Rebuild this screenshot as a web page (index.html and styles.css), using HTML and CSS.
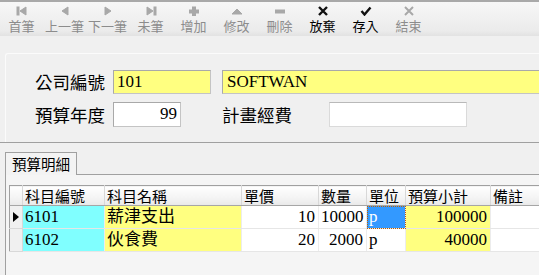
FILE: index.html
```html
<!DOCTYPE html>
<html lang="zh-Hant">
<head>
    <meta charset="UTF-8">
    <title>預算資料維護</title>
    <link rel="stylesheet" href="styles.css">
</head>
<body>

<div class="toolbar">
    <div class="tool off">
        <svg class="ico" width="12" height="10" viewBox="0 0 12 10"><rect x="1" y="1" width="2" height="8"/><polygon points="10,1 10,9 4,5"/></svg>
        <span>首筆</span>
    </div>
    <div class="tool off">
        <svg class="ico" width="12" height="10" viewBox="0 0 12 10"><polygon points="9,1 9,9 3,5"/></svg>
        <span>上一筆</span>
    </div>
    <div class="tool off">
        <svg class="ico" width="12" height="10" viewBox="0 0 12 10"><polygon points="3,1 3,9 9,5"/></svg>
        <span>下一筆</span>
    </div>
    <div class="tool off">
        <svg class="ico" width="12" height="10" viewBox="0 0 12 10"><polygon points="2,1 2,9 8,5"/><rect x="9" y="1" width="2" height="8"/></svg>
        <span>未筆</span>
    </div>
    <div class="tool off">
        <svg class="ico" width="12" height="10" viewBox="0 0 12 10"><rect x="4.5" y="1" width="3" height="9"/><rect x="1.5" y="4" width="9" height="3"/></svg>
        <span>增加</span>
    </div>
    <div class="tool off">
        <svg class="ico" width="12" height="10" viewBox="0 0 12 10"><polygon points="1,8 11,8 6,3"/></svg>
        <span>修改</span>
    </div>
    <div class="tool off">
        <svg class="ico" width="12" height="10" viewBox="0 0 12 10"><rect x="1.5" y="4" width="9" height="3"/></svg>
        <span>刪除</span>
    </div>
    <div class="tool">
        <svg class="ico" width="12" height="10" viewBox="0 0 12 10"><path d="M2 1 L10 9 M10 1 L2 9" stroke-width="2.4" fill="none"/></svg>
        <span>放棄</span>
    </div>
    <div class="tool">
        <svg class="ico" width="12" height="10" viewBox="0 0 12 10"><path d="M1.5 5 L4.5 8.5 L10.5 1.5" stroke-width="2.4" fill="none"/></svg>
        <span>存入</span>
    </div>
    <div class="tool off">
        <svg class="ico" width="12" height="10" viewBox="0 0 12 10"><path d="M2 1 L10 9 M10 1 L2 9" stroke-width="2" fill="none"/></svg>
        <span>結束</span>
    </div>
</div>

<div class="head-panel">
    <div class="field-row">
        <label class="lbl">公司編號</label>
        <div class="box yellow w-code">101</div>
        <div class="box yellow w-name">SOFTWAN</div>
    </div>
    <div class="field-row">
        <label class="lbl">預算年度</label>
        <div class="box num w-year">99</div>
        <label class="lbl lbl-wide">計畫經費</label>
        <div class="box w-plan"></div>
    </div>
</div>
<div class="divider"></div>

<div class="tabs">
    <div class="tab">預算明細</div>
    <div class="tab-rest"></div>
</div>

<div class="tab-page">
    <table class="grid">
        <colgroup>
            <col class="c-ind">
            <col class="c-code">
            <col class="c-name">
            <col class="c-price">
            <col class="c-qty">
            <col class="c-unit">
            <col class="c-sub">
            <col class="c-note">
        </colgroup>
        <tr>
            <th></th>
            <th>科目編號</th>
            <th>科目名稱</th>
            <th>單價</th>
            <th>數量</th>
            <th>單位</th>
            <th>預算小計</th>
            <th>備註</th>
        </tr>
        <tr>
            <td class="ind"><svg width="8" height="10" viewBox="0 0 8 10"><polygon points="1,0 7,5 1,10"/></svg></td>
            <td class="cyan">6101</td>
            <td class="yellow">薪津支出</td>
            <td class="num">10</td>
            <td class="num">10000</td>
            <td class="unit sel">p</td>
            <td class="yellow num">100000</td>
            <td></td>
        </tr>
        <tr>
            <td class="ind"></td>
            <td class="cyan">6102</td>
            <td class="yellow">伙食費</td>
            <td class="num">20</td>
            <td class="num">2000</td>
            <td class="unit">p</td>
            <td class="yellow num">40000</td>
            <td></td>
        </tr>
    </table>
</div>

</body>
</html>
```

FILE: styles.css
```css
body {
    margin: 0;
    width: 539px;
    height: 275px;
    overflow: hidden;
    background: #f0f0f0;
    font-family: "Noto Sans CJK TC", sans-serif;
    color: #000;
}

/* toolbar */
.toolbar {
    display: flex;
    height: 34px;
    border-top: 2px solid #a9a9a9;
    background: linear-gradient(#f7f7f7, #ebebeb 85%, #e2e2e2);
}
.tool {
    width: 43px;
    display: flex;
    flex-direction: column;
    align-items: center;
    font-size: 13px;
    line-height: 16px;
}
.tool .ico {
    margin-top: 4px;
    margin-bottom: 2px;
    fill: #111;
    stroke: #111;
}
.tool.off {
    color: #8c8c8c;
}
.tool.off .ico {
    fill: #a8a8a8;
    stroke: #a8a8a8;
}

/* header fields */
.head-panel {
    margin: 17px 0 0 5px;
    height: 89px;
    box-sizing: border-box;
    border: 1px solid #fbfbfb;
    border-right: none;
    border-bottom: none;
    border-radius: 3px 0 0 0;
    padding: 15px 0 0 29px;
}
.field-row {
    display: flex;
    align-items: center;
    height: 25px;
    margin-bottom: 8px;
}
.lbl {
    width: 78px;
    font-size: 17.5px;
    line-height: 20px;
}
.lbl-wide {
    margin-left: 41px;
    width: 107px;
}
.box {
    height: 24px;
    box-sizing: border-box;
    border: 1px solid #c4c4c4;
    border-top-color: #a9a9a9;
    border-left-color: #a9a9a9;
    background: #fff;
    font-family: "Liberation Serif", serif;
    font-size: 17px;
    line-height: 22px;
    padding: 0 3px;
}
.box.yellow {
    background: #ffff80;
}
.box.num {
    text-align: right;
}
.w-code {
    width: 98px;
}
.w-name {
    flex: 1;
    margin-left: 11px;
    border-right: none;
    padding-left: 4px;
}
.w-year {
    width: 68px;
    height: 25px;
}
.w-plan {
    width: 138px;
    height: 25px;
    border-color: #dadada;
    border-top-color: #b9b9b9;
}
.divider {
    height: 1px;
    background: #a0a0a0;
}

/* tabs */
.tabs {
    display: flex;
    margin-top: 9px;
    height: 23px;
}
.tab {
    margin-left: 5px;
    width: 72px;
    box-sizing: border-box;
    border: 1px solid #a0a0a0;
    border-bottom: none;
    background: #f3f3f3;
    font-size: 14.5px;
    line-height: 22px;
    padding-left: 6px;
}
.tab-rest {
    flex: 1;
    border-bottom: 1px solid #a0a0a0;
}
.tab-page {
    margin-left: 5px;
    border-left: 1px solid #a0a0a0;
    background: #f5f5f5;
    padding: 10px 0 0 3px;
    height: 100px;
}

/* grid */
.grid {
    table-layout: fixed;
    border-collapse: collapse;
    width: 540px;
    background: #fff;
    border-top: 1px solid #a0a0a0;
    border-left: 1px solid #a0a0a0;
}
.c-ind { width: 13px; }
.c-code { width: 82px; }
.c-name { width: 137px; }
.c-price { width: 77px; }
.c-qty { width: 48px; }
.c-unit { width: 39px; }
.c-sub { width: 85px; }
.c-note { width: 59px; }
.grid th {
    height: 19px;
    padding: 0 2px;
    text-align: left;
    font-weight: normal;
    font-size: 15px;
    line-height: 18px;
    background: linear-gradient(#ffffff, #f4f4f4 60%, #e9e9e9);
    border-right: 1px solid #d8d8d8;
    border-bottom: 1px solid #a6a6a6;
    white-space: nowrap;
    overflow: hidden;
}
.grid td {
    height: 22px;
    padding: 0 3px 0 2px;
    font-family: "Liberation Serif", "Noto Sans CJK TC", serif;
    font-size: 17px;
    line-height: 20px;
    border-right: 1px solid #ececec;
    border-bottom: 1px solid #e6e6e6;
    white-space: nowrap;
    overflow: hidden;
}
.grid td.ind {
    background: #f0f0f0;
    padding: 0 0 0 2px;
    border-right: 1px solid #d8d8d8;
    border-bottom: 1px solid #d8d8d8;
}
.grid td.ind svg {
    display: block;
}
.grid td.cyan {
    background: #80ffff;
}
.grid td.yellow {
    background: #ffff80;
}
.grid td.num {
    text-align: right;
}
.grid td.unit {
    padding-left: 2px;
}
.grid td.sel {
    background: #3399ff;
    color: #fff;
    outline: 1px dotted #c06000;
    outline-offset: -1px;
}
```
